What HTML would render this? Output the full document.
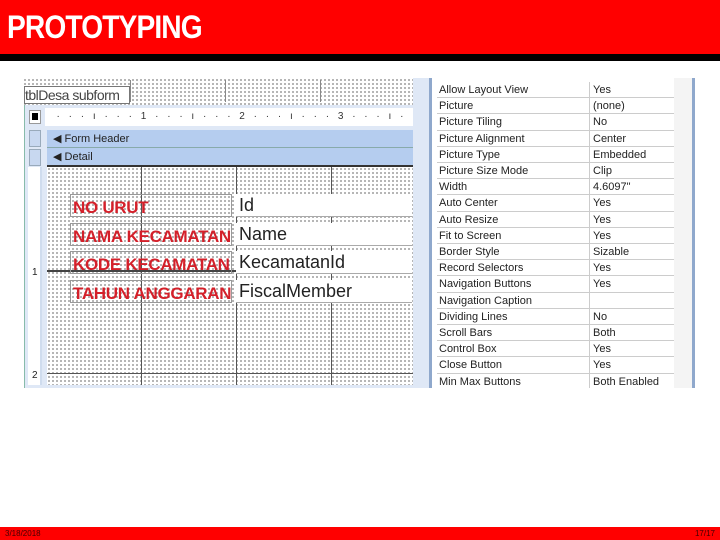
<!DOCTYPE html>
<html><head><style>
*{margin:0;padding:0;box-sizing:border-box}
body{width:720px;height:540px;background:#fff;position:relative;overflow:hidden;font-family:"Liberation Sans",sans-serif}
.a{position:absolute}
.dots{background-color:#fff;background-image:radial-gradient(circle,#555 0.6px,transparent 0.9px);background-size:4px 4px}
.lbl{position:absolute;left:70px;width:162px;height:23px;border:1px solid #999;color:#d4202a;font-weight:bold;font-size:17px;line-height:25px;padding-left:2px;white-space:nowrap;overflow:hidden;letter-spacing:-0.3px}
.fld{position:absolute;left:236px;width:176px;height:23px;background:#fff;border-bottom:1px solid #aaa;font-size:18px;line-height:23px;padding-left:3px;color:#222}
.pr{position:absolute;left:437px;width:237px;height:16.2px;font-size:11px;line-height:16px;color:#222;border-bottom:1px solid #ccc}
.pr span{position:absolute;left:2px}
.pr b{font-weight:normal;position:absolute;left:152px;border-left:1px solid #ccc;padding-left:3px;height:16px}
</style></head><body>
<div class="a" style="left:0;top:0;width:720px;height:54px;background:#f00"></div>
<div class="a" style="left:7px;top:9px;color:#fff;font-weight:bold;font-size:32px;letter-spacing:-1px;transform:scaleX(0.88);transform-origin:left">PROTOTYPING</div>
<div class="a" style="left:0;top:54px;width:720px;height:7px;background:#000"></div>

<div class="a dots" style="left:23px;top:78px;width:390px;height:310px"></div>
<div class="a" style="left:24px;top:86px;width:106px;height:18px;border:1px solid #777;background:#fff;font-size:14px;line-height:16px;color:#444;letter-spacing:-0.5px">tblDesa subform</div>
<div class="a" style="left:130px;top:80px;width:1px;height:22px;background:#888"></div>
<div class="a" style="left:225px;top:80px;width:1px;height:22px;background:#888"></div>
<div class="a" style="left:320px;top:80px;width:1px;height:22px;background:#888"></div>
<div class="a" style="left:24px;top:105px;width:389px;height:283px;background:#dfe8f6;border-left:1px solid #8ba"></div>
<div class="a" style="left:29px;top:110px;width:12px;height:14px;background:#fff;border:1px solid #999"></div>
<div class="a" style="left:32px;top:113px;width:6px;height:7px;background:#000"></div>
<div class="a" style="left:45px;top:108px;width:368px;height:18px;background:#fff;font-size:10px;line-height:18px;color:#333;white-space:pre;letter-spacing:3px">  · · · ı · · · 1 · · · ı · · · 2 · · · ı · · · 3 · · · ı · ·</div>
<div class="a" style="left:29px;top:130px;width:12px;height:17px;background:#c8d8f0;border:1px solid #9ab"></div>
<div class="a" style="left:29px;top:149px;width:12px;height:17px;background:#c8d8f0;border:1px solid #9ab"></div>
<div class="a" style="left:47px;top:130px;width:366px;height:18px;background:#b5cdef;border-bottom:1px solid #8aa;font-size:11px;line-height:18px;padding-left:6px;color:#222">◀ Form Header</div>
<div class="a" style="left:47px;top:148px;width:366px;height:19px;background:#b5cdef;border-bottom:2px solid #333;font-size:11px;line-height:18px;padding-left:6px;color:#222">◀ Detail</div>
<div class="a" style="left:28px;top:167px;width:14px;height:218px;background:#fff;border-right:2px solid #cfdcee;font-size:10px;color:#222">
<div class="a" style="left:4px;top:100px">1</div><div class="a" style="left:4px;top:203px">2</div></div>
<div class="a dots" style="left:47px;top:167px;width:366px;height:218px"></div>
<div class="a" style="left:141px;top:167px;width:1px;height:218px;background:#555"></div>
<div class="a" style="left:236px;top:167px;width:1px;height:218px;background:#555"></div>
<div class="a" style="left:331px;top:167px;width:1px;height:218px;background:#555"></div>
<div class="a" style="left:47px;top:373px;width:366px;height:1px;background:#555"></div>
<div class="a" style="left:47px;top:270px;width:190px;height:1.5px;background:#444"></div>
<div class="lbl" style="top:194px">NO URUT</div>
<div class="lbl" style="top:223px">NAMA KECAMATAN</div>
<div class="lbl" style="top:251px">KODE KECAMATAN</div>
<div class="lbl" style="top:280px">TAHUN ANGGARAN</div>
<div class="fld" style="top:194px">Id</div>
<div class="fld" style="top:223px">Name</div>
<div class="fld" style="top:251px">KecamatanId</div>
<div class="fld" style="top:280px">FiscalMember</div>

<div class="a" style="left:413px;top:78px;width:24px;height:310px;background:#dfe8f6"></div>
<div class="a" style="left:429px;top:78px;width:3px;height:310px;background:#8fa8cc"></div>
<div class="a" style="left:432px;top:78px;width:242px;height:310px;background:#fff"></div>
<div class="a" style="left:674px;top:78px;width:20px;height:310px;background:#f4f4f4"></div>
<div class="a" style="left:692px;top:78px;width:3px;height:310px;background:#8fa8cc"></div>
<div class="pr" style="top:82px"><span>Allow Layout View</span><b>Yes</b></div>
<div class="pr" style="top:98.2px"><span>Picture</span><b>(none)</b></div>
<div class="pr" style="top:114.4px"><span>Picture Tiling</span><b>No</b></div>
<div class="pr" style="top:130.6px"><span>Picture Alignment</span><b>Center</b></div>
<div class="pr" style="top:146.8px"><span>Picture Type</span><b>Embedded</b></div>
<div class="pr" style="top:163px"><span>Picture Size Mode</span><b>Clip</b></div>
<div class="pr" style="top:179.2px"><span>Width</span><b>4.6097"</b></div>
<div class="pr" style="top:195.4px"><span>Auto Center</span><b>Yes</b></div>
<div class="pr" style="top:211.6px"><span>Auto Resize</span><b>Yes</b></div>
<div class="pr" style="top:227.8px"><span>Fit to Screen</span><b>Yes</b></div>
<div class="pr" style="top:244px"><span>Border Style</span><b>Sizable</b></div>
<div class="pr" style="top:260.2px"><span>Record Selectors</span><b>Yes</b></div>
<div class="pr" style="top:276.4px"><span>Navigation Buttons</span><b>Yes</b></div>
<div class="pr" style="top:292.6px"><span>Navigation Caption</span><b></b></div>
<div class="pr" style="top:308.8px"><span>Dividing Lines</span><b>No</b></div>
<div class="pr" style="top:325px"><span>Scroll Bars</span><b>Both</b></div>
<div class="pr" style="top:341.2px"><span>Control Box</span><b>Yes</b></div>
<div class="pr" style="top:357.4px"><span>Close Button</span><b>Yes</b></div>
<div class="pr" style="top:373.6px;height:14px;overflow:hidden;border:0"><span>Min Max Buttons</span><b>Both Enabled</b></div>

<div class="a" style="left:0;top:527px;width:720px;height:13px;background:#f00;font-size:8px;line-height:13px;color:#400">
<span class="a" style="left:5px">3/18/2018</span><span class="a" style="right:5px">17/17</span></div>
</body></html>
